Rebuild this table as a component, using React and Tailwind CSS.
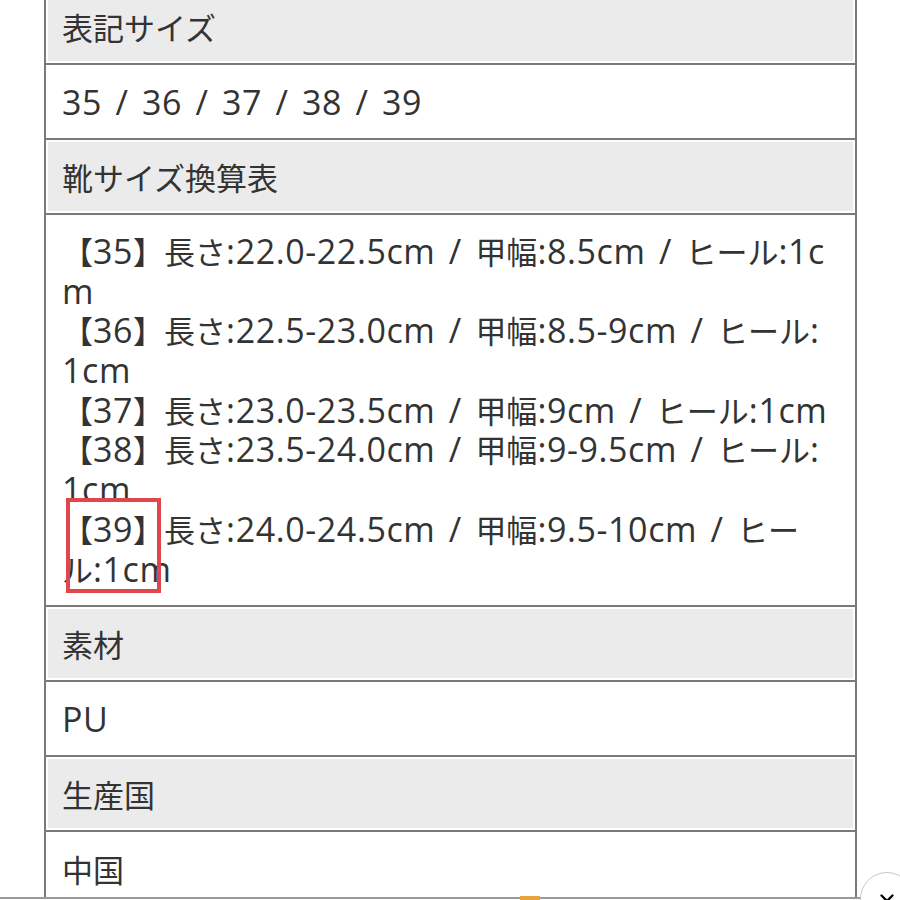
import { X } from "lucide-react";

const font = { fontFamily: '"Noto Sans CJK JP", "Noto Sans", sans-serif' };

const sizeLines = [
  "【35】長さ:22.0-22.5cm / 甲幅:8.5cm / ヒール:1c",
  "m",
  "【36】長さ:22.5-23.0cm / 甲幅:8.5-9cm / ヒール:",
  "1cm",
  "【37】長さ:23.0-23.5cm / 甲幅:9cm / ヒール:1cm",
  "【38】長さ:23.5-24.0cm / 甲幅:9-9.5cm / ヒール:",
  "1cm",
  "【39】長さ:24.0-24.5cm / 甲幅:9.5-10cm / ヒー",
  "ル:1cm",
];

// 英数字だけ少し大きめの欧文フォントで表示
const Txt = ({ children }) =>
  children.split(/([\x20-\x7e]+)/).map((part, i) =>
    i % 2 ? (
      <span
        key={i}
        className="font-['Open_Sans'] text-[34px] leading-none tracking-[0.6px] [word-spacing:4px]"
      >
        {part}
      </span>
    ) : (
      part
    )
  );

const Row = ({ head, children }) => (
  <div className="border-b-2 border-[#7a7a7a] p-[2px] bg-white">
    <div
      className={
        (head ? "bg-[#ebebeb] " : "bg-white ") +
        "h-[69px] px-[14px] flex items-center whitespace-pre"
      }
    >
      <div className="leading-[40px]">
        <Txt>{children}</Txt>
      </div>
    </div>
  </div>
);

export default function App() {
  return (
    <div
      className="relative w-[900px] h-[900px] overflow-hidden bg-white text-[#333] text-[31px]"
      style={font}
    >
      <div className="ml-[44px] mt-[-10px] w-[813px] border-x-2 border-[#7a7a7a]">
        <Row head>表記サイズ</Row>
        <Row>35 / 36 / 37 / 38 / 39</Row>
        <Row head>靴サイズ換算表</Row>
        <div className="border-b-2 border-[#7a7a7a] p-[2px] bg-white">
          <div className="h-[386px] px-[14px] pt-[14px] leading-[39.7px]">
            {sizeLines.map((line, i) => (
              <div key={i} className="whitespace-pre h-[39.7px]">
                <Txt>{line}</Txt>
              </div>
            ))}
          </div>
        </div>
        <Row head>素材</Row>
        <Row>PU</Row>
        <Row head>生産国</Row>
        <Row>中国</Row>
      </div>

      {/* 注釈の赤枠 */}
      <div className="absolute left-[66px] top-[498px] w-[95px] h-[95px] border-4 border-[#e0474c]" />

      {/* 下部のバナー */}
      <div className="absolute left-0 top-[897px] w-[900px] h-[10px] border-t-2 border-[#9a9a9a] bg-white" />
      <div className="absolute left-[520px] top-[896px] w-[20px] h-[8px] bg-[#e8a33c]" />
      <div className="absolute left-[860px] top-[872px] w-[54px] h-[54px] rounded-full border border-[#c8c8c8] bg-white flex items-start justify-center pt-[17px]">
        <X className="w-[22px] h-[22px] text-black" strokeWidth={2.5} />
      </div>
    </div>
  );
}
